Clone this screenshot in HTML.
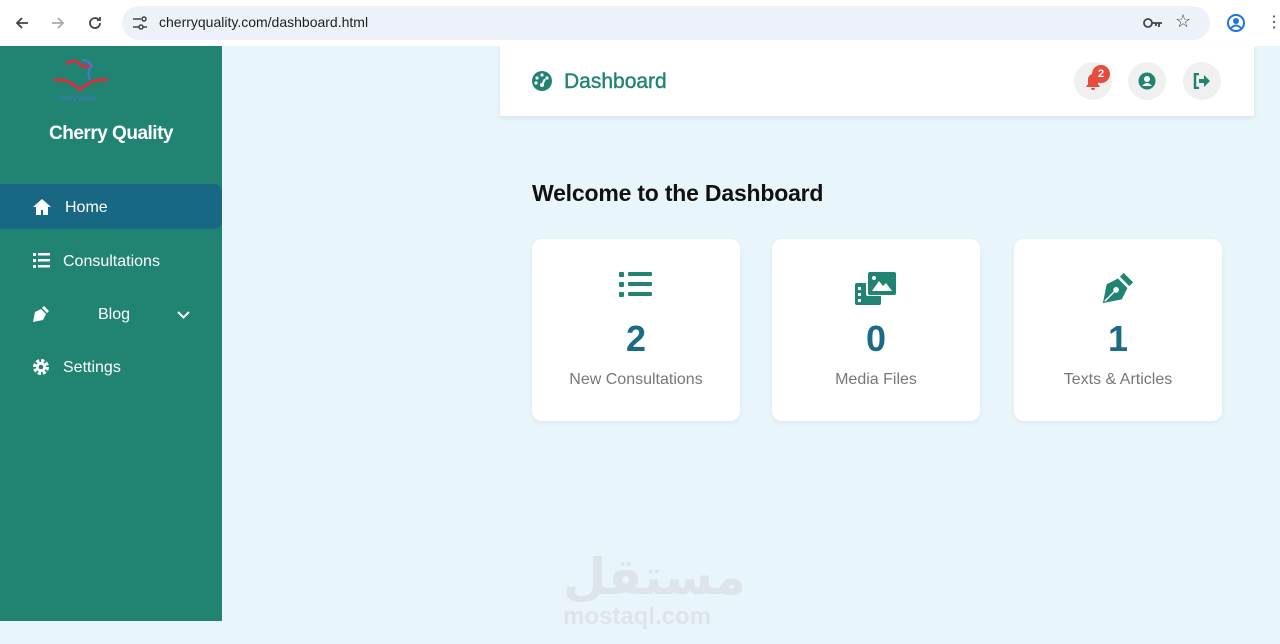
<!DOCTYPE html>
<html><head><meta charset="utf-8"><style>
*{box-sizing:border-box;margin:0;padding:0}
body{width:1280px;height:644px;overflow:hidden;background:#e8f6fc;font-family:"Liberation Sans",sans-serif;position:relative}
.bar{position:absolute;left:0;top:0;width:1280px;height:46px;background:#fff}
.url{position:absolute;left:122px;top:6px;width:1088px;height:34px;border-radius:17px;background:#edf2fa}
.url span{position:absolute;left:37px;top:8px;font-size:14px;color:#1f1f1f}
.side{position:absolute;left:0;top:46px;width:222px;height:575px;background:#218473}
.brand{position:absolute;left:0;width:222px;text-align:center;color:#fff;font-size:19px;font-weight:bold;letter-spacing:-0.5px}
.nav{position:absolute;left:0;width:222px;height:45px;color:#fff;font-size:16px}
.nav span{position:absolute;top:15px}
.nav svg{position:absolute;top:14px}
.head{position:absolute;left:500px;top:46px;width:754px;height:70px;background:#fff;box-shadow:0 2px 5px rgba(0,0,0,.08)}
.circ{position:absolute;top:16px;width:38px;height:38px;border-radius:50%;background:#f0f0f0}
.card{position:absolute;top:239px;width:208px;height:182px;background:#fff;border-radius:10px;box-shadow:0 2px 6px rgba(0,0,0,.05);text-align:center}
.card .n{position:absolute;top:79px;left:0;width:100%;font-size:36px;color:#1b6a86;font-weight:bold}
.card .l{position:absolute;top:132px;left:0;width:100%;font-size:16px;color:#777}
.card svg{position:absolute;top:32px;left:50%;transform:translateX(-50%)}
</style></head><body>
<div class="bar">
<svg style="position:absolute;left:14px;top:15px" width="16" height="16" viewBox="0 0 16 16"><path d="M14 8H3M8 3L3 8l5 5" stroke="#444" stroke-width="1.8" fill="none"/></svg>
<svg style="position:absolute;left:50px;top:15px" width="16" height="16" viewBox="0 0 16 16"><path d="M2 8h11M8 3l5 5-5 5" stroke="#aaa" stroke-width="1.8" fill="none"/></svg>
<svg style="position:absolute;left:87px;top:15px" width="16" height="16" viewBox="0 0 16 16"><path d="M13 8a5 5 0 1 1-1.5-3.5M13 2v3h-3" stroke="#444" stroke-width="1.8" fill="none"/></svg>
<div class="url"><svg style="position:absolute;left:10px;top:10px" width="16" height="14"><path d="M1 3h8M11 11h4M1 11h6" stroke="#444" stroke-width="1.6"/><circle cx="12" cy="3" r="2" stroke="#444" fill="none" stroke-width="1.5"/><circle cx="9" cy="11" r="2" stroke="#444" fill="none" stroke-width="1.5"/></svg><span>cherryquality.com/dashboard.html</span>
<svg style="position:absolute;left:1021px;top:11px" width="20" height="12"><circle cx="5" cy="6" r="4" stroke="#444" stroke-width="1.8" fill="none"/><path d="M9 6h10M16 6v4M13 6v3" stroke="#444" stroke-width="1.8"/></svg>
<div style="position:absolute;left:1053px;top:5px;font-size:18px;color:#444">☆</div></div>
<svg style="position:absolute;left:1226px;top:13px" width="20" height="20"><circle cx="10" cy="10" r="8" stroke="#1a73e8" stroke-width="2" fill="none"/><circle cx="10" cy="8" r="3" fill="#1a73e8"/><path d="M5 15q5-5 10 0" stroke="#1a73e8" stroke-width="2" fill="none"/></svg>
<div style="position:absolute;left:1266px;top:12px;font-size:16px;color:#444">⋮</div>
</div>
<div class="side">
<svg style="position:absolute;left:52px;top:8px" width="58" height="50" viewBox="0 0 58 50"><path d="M2 26q14-2 26 10q12-12 28-10" stroke="#d43040" stroke-width="3" fill="none"/><path d="M14 10q8-6 14 0t10 0" stroke="#d43040" stroke-width="3" fill="none"/><path d="M30 6q6 0 10 6q-6 4-2 14" stroke="#3f7bd0" stroke-width="2" fill="none"/><text x="6" y="46" font-size="6" fill="#3f7bd0">Cherry Quality</text></svg>
<div class="brand" style="top:77px">Cherry Quality</div>
<div class="nav" style="top:138px;background:#186884;border-radius:0 8px 8px 0"><svg style="left:32px" width="20" height="18" viewBox="0 0 20 18"><path d="M10 1L1 9h3v8h5v-5h2v5h5V9h3z" fill="#fff"/></svg><span style="left:65px">Home</span></div>
<div class="nav" style="top:192px"><svg style="left:33px" width="17" height="16"><rect x="0" y="1" width="3" height="3" fill="#fff"/><rect x="0" y="7" width="3" height="3" fill="#fff"/><rect x="0" y="13" width="3" height="3" fill="#fff"/><rect x="5" y="1" width="12" height="2.5" fill="#fff"/><rect x="5" y="7" width="12" height="2.5" fill="#fff"/><rect x="5" y="13" width="12" height="2.5" fill="#fff"/></svg><span style="left:63px">Consultations</span></div>
<div class="nav" style="top:245px"><svg style="left:32px" width="18" height="18" viewBox="0 0 18 18"><path d="M12 1l5 5-2 2-5-5zM9 4l5 5-3 6-10 2 2-10z" fill="#fff"/></svg><span style="left:98px">Blog</span><svg style="left:177px;top:20px" width="13" height="8"><path d="M1 1l5.5 5.5L12 1" stroke="#fff" stroke-width="2" fill="none"/></svg></div>
<div class="nav" style="top:298px"><svg style="left:32px" width="18" height="18" viewBox="0 0 18 18"><circle cx="9" cy="9" r="6" fill="none" stroke="#fff" stroke-width="4" stroke-dasharray="3 1.7"/><circle cx="9" cy="9" r="5" fill="#fff"/><circle cx="9" cy="9" r="2.3" fill="#218473"/></svg><span style="left:63px">Settings</span></div>
</div>
<div class="head">
<svg style="position:absolute;left:31px;top:24px" width="22" height="22" viewBox="0 0 22 22"><circle cx="11" cy="11" r="10" fill="#218473"/><circle cx="11" cy="5" r="1.6" fill="#fff"/><circle cx="6" cy="8" r="1.6" fill="#fff"/><circle cx="16" cy="8" r="1.6" fill="#fff"/><circle cx="5" cy="13" r="1.6" fill="#fff"/><path d="M11 15l3-6" stroke="#fff" stroke-width="2"/><circle cx="11" cy="15" r="2" fill="#fff"/></svg>
<div style="position:absolute;left:64px;top:24px;font-size:21px;color:#218473;-webkit-text-stroke:0.4px #218473">Dashboard</div>
<div class="circ" style="left:574px"><svg style="position:absolute;left:11px;top:11px" width="16" height="18" viewBox="0 0 16 18"><path d="M8 1a5 5 0 0 0-5 5v5l-2 3h14l-2-3V6a5 5 0 0 0-5-5zM6 15h4a2 2 0 0 1-4 0z" fill="#e74c3c"/></svg><div style="position:absolute;left:18px;top:3px;width:18px;height:18px;border-radius:50%;background:#e74c3c;color:#fff;font-size:11px;text-align:center;line-height:18px;font-weight:bold">2</div></div>
<div class="circ" style="left:628px"><svg style="position:absolute;left:10px;top:10px" width="18" height="18"><circle cx="9" cy="9" r="8.5" fill="#218473"/><circle cx="9" cy="7" r="3" fill="#fff"/><path d="M4 14q5-6 10 0" fill="#fff"/></svg></div>
<div class="circ" style="left:683px"><svg style="position:absolute;left:10px;top:11px" width="18" height="16"><path d="M6 1H2v14h4" stroke="#218473" stroke-width="2.5" fill="none"/><path d="M6 6h5V2l6 6-6 6v-4H6z" fill="#218473"/></svg></div>
</div>
<div style="position:absolute;left:532px;top:180px;font-size:23px;color:#111;font-weight:bold;letter-spacing:-0.2px">Welcome to the Dashboard</div>
<div class="card" style="left:532px"><svg width="34" height="28"><rect x="0" y="1" width="5" height="5" rx="1" fill="#218473"/><rect x="0" y="11" width="5" height="5" rx="1" fill="#218473"/><rect x="0" y="21" width="5" height="5" rx="1" fill="#218473"/><rect x="9" y="1" width="24" height="4" rx="1" fill="#218473"/><rect x="9" y="11" width="24" height="4" rx="1" fill="#218473"/><rect x="9" y="21" width="24" height="4" rx="1" fill="#218473"/></svg><div class="n">2</div><div class="l">New Consultations</div></div>
<div class="card" style="left:772px"><svg width="42" height="34" viewBox="0 0 42 34"><rect x="0" y="12" width="26" height="22" rx="2" fill="#218473"/><rect x="11" y="0" width="31" height="25" rx="2" fill="#fff"/><rect x="13" y="1" width="28" height="23" rx="2" fill="#218473"/><path d="M17 20l7-10 4 5 3-3 6 8z" fill="#fff"/><circle cx="19" cy="7" r="2" fill="#fff"/><rect x="3" y="16" width="3" height="3" fill="#fff"/><rect x="3" y="22" width="3" height="3" fill="#fff"/><rect x="3" y="28" width="3" height="3" fill="#fff"/></svg><div class="n">0</div><div class="l">Media Files</div></div>
<div class="card" style="left:1014px"><svg width="34" height="34" viewBox="0 0 18 18"><path d="M12 1l5 5-2 2-5-5zM9 4l5 5-3 6-10 2 2-10z" fill="#218473"/><circle cx="8" cy="10" r="1.5" fill="#fff"/><path d="M2 16l5-5" stroke="#fff" stroke-width="0.8"/></svg><div class="n">1</div><div class="l">Texts &amp; Articles</div></div>
<div style="position:absolute;left:563px;top:548px;width:155px;font-size:50px;color:#dde5e8;font-weight:bold;font-family:'DejaVu Sans',sans-serif;white-space:nowrap">مستقل</div>
<div style="position:absolute;left:563px;top:603px;font-size:24px;color:#dde5e8;font-weight:bold">mostaql.com</div>
</body></html>
